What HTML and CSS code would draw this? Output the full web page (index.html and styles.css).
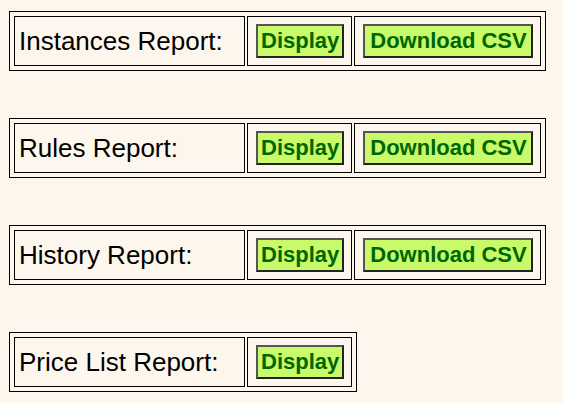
FILE: index.html
```html
<!DOCTYPE html>
<html>
<head>
<meta charset="utf-8">
<link rel="stylesheet" href="styles.css">
</head>
<body>
<div class="page">
  <table class="report">
    <tr>
      <td class="label">Instances Report:</td>
      <td class="action"><button class="btn">Display</button></td>
      <td class="action"><button class="btn">Download CSV</button></td>
    </tr>
  </table>
  <table class="report">
    <tr>
      <td class="label">Rules Report:</td>
      <td class="action"><button class="btn">Display</button></td>
      <td class="action"><button class="btn">Download CSV</button></td>
    </tr>
  </table>
  <table class="report">
    <tr>
      <td class="label">History Report:</td>
      <td class="action"><button class="btn">Display</button></td>
      <td class="action"><button class="btn">Download CSV</button></td>
    </tr>
  </table>
  <table class="report">
    <tr>
      <td class="label">Price List Report:</td>
      <td class="action"><button class="btn">Display</button></td>
    </tr>
  </table>
</div>
</body>
</html>
```
FILE: styles.css
```css
html, body {
  margin: 0;
  padding: 0;
  background: #fdf6ec;
}
body {
  font-family: "Liberation Sans", Arial, sans-serif;
}
.page {
  display: flex;
  flex-direction: column;
  align-items: flex-start;
  gap: 47px;
  padding: 11px 9px;
}
.report {
  border: 1px solid #000;
  border-collapse: separate;
  border-spacing: 2px;
  padding: 2px;
}
.report td {
  border: 1px solid #000;
  height: 48px;
  padding: 0;
}
.label {
  width: 225px;
  padding: 0 0 0 4px !important;
  font-size: 26px;
  color: #000;
}
.action {
  padding: 0 7px 0 8px !important;
}
.btn {
  display: block;
  font-family: "Liberation Sans", Arial, sans-serif;
  font-weight: bold;
  font-size: 22px;
  color: #006600;
  background: #c8fa6a;
  border: 2px solid;
  border-color: #555 #222 #222 #555;
  padding: 2px 3px;
  line-height: 26px;
  margin: 0;
}
.action + .action .btn {
  padding: 2px 4px 2px 5px;
}
```
